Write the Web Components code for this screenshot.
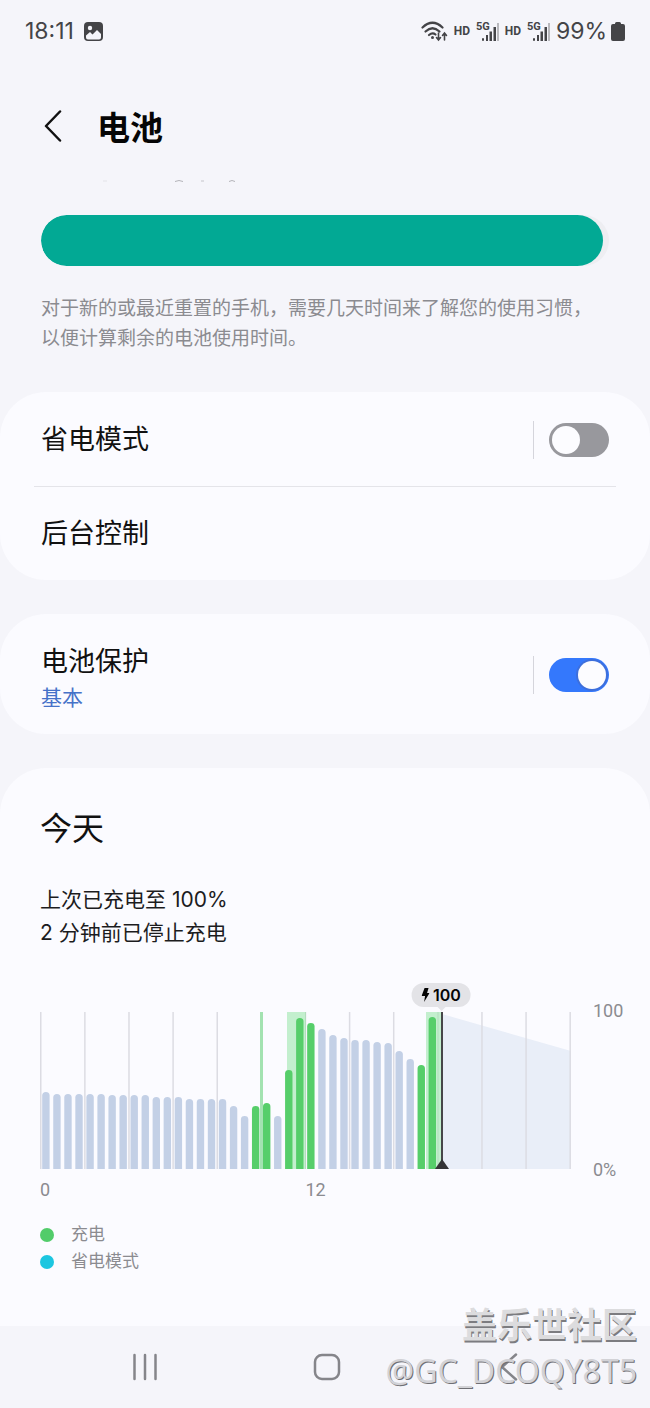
<!DOCTYPE html>
<html lang="zh-CN">
<head>
<meta charset="UTF-8">
<meta name="viewport" content="width=device-width, initial-scale=1">
<title>电池</title>
<style>
  body {
    margin: 0;
    background: #f5f5fa;
    color: #111;
    font-family: Inter, "Noto Sans CJK SC", sans-serif;
  }
</style>
</head>
<body>
<battery-screen>
  <status-bar slot="status" time="18:11" level="99%"></status-bar>
  <page-header slot="header">电池</page-header>

  <battery-level value="99">对于新的或最近重置的手机，需要几天时间来了解您的使用习惯，以便计算剩余的电池使用时间。</battery-level>

  <settings-card>
    <setting-row label="省电模式" toggle="off"></setting-row>
    <setting-row label="后台控制"></setting-row>
  </settings-card>

  <settings-card>
    <setting-row label="电池保护" detail="基本" toggle="on"></setting-row>
  </settings-card>

  <usage-card>
    <span slot="title">今天</span>
    <span slot="charged">上次已充电至 100%</span>
    <span slot="stopped">2 分钟前已停止充电</span>
    <usage-chart current="100"></usage-chart>
    <legend-item slot="legend" color="#52cc6a">充电</legend-item>
    <legend-item slot="legend" color="#1cc6e0">省电模式</legend-item>
  </usage-card>

  <nav-bar slot="nav"></nav-bar>
  <water-mark slot="mark">
    盖乐世社区
    <span slot="user">@GC_DCOQY8T5</span>
  </water-mark>
</battery-screen>

<script>
class BatteryScreen extends HTMLElement {
  constructor() {
    super();
    this.root = this.attachShadow({ mode: "open" });
    this.root.innerHTML = `
    <style>
      :host {
        display: flex;
        flex-direction: column;
        min-height: 100vh;
        position: relative;
      }
      main {
        display: flex;
        flex-direction: column;
        gap: 34px;
        flex: 1;
      }
    </style>
    <slot name="status"></slot>
    <slot name="header"></slot>
    <main><slot></slot></main>
    <slot name="nav"></slot>
    <slot name="mark"></slot>
    `;
  }
}

class StatusBar extends HTMLElement {
  constructor() {
    super();
    this.root = this.attachShadow({ mode: "open" });
  }

  connectedCallback() {
    this.render();
  }

  signal() {
    return `
    <span class="hd">HD</span>
    <span class="signal">
      <span class="net">5G</span>
      <svg width="17" height="18" viewBox="0 0 17 18" fill="#444447">
        <rect x="0" y="15" width="2" height="3" rx="1"/>
        <rect x="4" y="12" width="2" height="6"/>
        <rect x="7.500" y="8.500" width="2.500" height="9.500"/>
        <rect x="11.500" y="4" width="2.500" height="14"/>
        <rect x="15" y="0" width="2" height="18" fill="#b9b9bd"/>
      </svg>
    </span>`;
  }

  render() {
    this.root.innerHTML = `
    <style>
      :host {
        display: flex;
        align-items: center;
        justify-content: space-between;
        height: 62px;
        padding: 0 25px;
        color: #444447;
        font-size: 23px;
        line-height: 28px;
      }
      .left, .right {
        display: flex;
        align-items: center;
      }
      .left { gap: 10px; }
      .right { gap: 6px; }
      svg { display: block; }
      .hd {
        font: 700 12px/16px Roboto, sans-serif;
      }
      .signal {
        display: flex;
        align-items: flex-end;
        height: 20px;
      }
      .net {
        align-self: flex-start;
        margin-right: -8px;
        font: 700 11px/12px Roboto, sans-serif;
      }
      .level {
        display: flex;
        align-items: center;
        gap: 4px;
      }
    </style>
    <div class="left">
      <span>${this.getAttribute("time")}</span>
      <svg width="19" height="19" viewBox="0 0 19 19">
        <rect width="19" height="19" rx="4" fill="#444447"/>
        <circle cx="6" cy="6" r="2.200" fill="#f5f5fa"/>
        <path d="M2 13.500 6 10l2.500 2.500L13 8l4 4v3.500a2 2 0 0 1-2 2H4a2 2 0 0 1-2-2z" fill="#f5f5fa"/>
      </svg>
    </div>
    <div class="right">
      <svg width="27" height="21" viewBox="0 0 27 21" fill="none" stroke="#444447" stroke-width="2.200" stroke-linecap="round">
        <path d="M1.500 6.500Q11.500-3 21.500 6.500"/>
        <path d="M4.500 10.500Q11.500 4 18.500 10.500"/>
        <path d="M8 14q3.500-3 6.500-.5"/>
        <circle cx="11.500" cy="16.500" r="1.500" fill="#444447" stroke="none"/>
        <path d="M17.500 12v6.500M15.500 16.500l2 2.500 2-2.500M23.500 19v-6.500M21.500 14.500l2-2.500 2 2.500" stroke-width="1.600"/>
      </svg>
      ${this.signal()}
      ${this.signal()}
      <span class="level">
        ${this.getAttribute("level")}
        <svg width="14" height="19" viewBox="0 0 14 19" fill="#444447">
          <path d="M4 2V1.500Q4 0 5.500 0h3Q10 0 10 1.500V2h2q2 0 2 2v13q0 2-2 2H2q-2 0-2-2V4q0-2 2-2z"/>
        </svg>
      </span>
    </div>
    `;
  }
}

class PageHeader extends HTMLElement {
  constructor() {
    super();
    this.root = this.attachShadow({ mode: "open" });
    this.root.innerHTML = `
    <style>
      :host {
        display: block;
        padding-top: 42px;
      }
      .bar {
        display: flex;
        align-items: center;
        gap: 24px;
        padding: 0 32px;
        height: 48px;
      }
      button {
        display: flex;
        align-items: center;
        justify-content: center;
        width: 41px;
        height: 48px;
        padding: 0 0 4px;
        border: 0;
        background: none;
      }
      h1 {
        margin: 0;
        font-size: 33px;
        font-weight: 700;
        line-height: 48px;
        color: #050505;
      }
      .edge {
        display: block;
        margin: 27px 0 0 100px;
      }
    </style>
    <div class="bar">
      <button type="button" aria-label="返回">
        <svg width="18" height="32" viewBox="0 0 18 32" fill="none" stroke="#111" stroke-width="2.500" stroke-linecap="round" stroke-linejoin="round">
          <path d="M16 1.500 2 16l14 14.500"/>
        </svg>
      </button>
      <h1><slot></slot></h1>
    </div>
    <!-- top edge of the line scrolled under the header -->
    <svg class="edge" width="140" height="4" viewBox="0 0 140 4" fill="none" stroke="#b4b4b9">
      <path d="M3 2h4" stroke="#e3e3e8"/>
      <path d="M75 2.500q4-2 8 0M129 2.500q3-2 6 0"/>
      <path d="M101 2h3" stroke="#c5c5ca"/>
    </svg>
    `;
  }
}

class BatteryLevel extends HTMLElement {
  constructor() {
    super();
    this.root = this.attachShadow({ mode: "open" });
  }

  connectedCallback() {
    this.root.innerHTML = `
    <style>
      :host {
        display: block;
        padding: 32px 41px 4px;
      }
      .track {
        height: 51px;
        border-radius: 26px;
        background: #eeeef2;
        overflow: hidden;
      }
      .fill {
        width: ${this.getAttribute("value")}%;
        height: 100%;
        border-radius: 26px;
        background: #02a994;
      }
      p {
        margin: 28px 0 0;
        font-size: 19px;
        line-height: 30px;
        color: #8b8b90;
      }
    </style>
    <div class="track"><div class="fill"></div></div>
    <p><slot></slot></p>
    `;
  }
}

class SettingsCard extends HTMLElement {
  constructor() {
    super();
    this.root = this.attachShadow({ mode: "open" });
    this.root.innerHTML = `
    <style>
      :host {
        display: block;
        border-radius: 46px;
        background: #fbfbff;
      }
      ::slotted(setting-row:not(:first-child)) {
        --line: #e4e4e9;
      }
    </style>
    <slot></slot>
    `;
  }
}

class SettingRow extends HTMLElement {
  constructor() {
    super();
    this.root = this.attachShadow({ mode: "open" });
  }

  connectedCallback() {
    this.render();
  }

  render() {
    const label = this.getAttribute("label");
    const detail = this.getAttribute("detail");
    const toggle = this.getAttribute("toggle");

    this.root.innerHTML = `
    <style>
      :host {
        display: block;
        padding: 0 34px;
      }
      .row {
        display: flex;
        align-items: center;
        justify-content: space-between;
        box-sizing: border-box;
        min-height: 94px;
        padding: 15px 7px;
        border-top: 1px solid var(--line, transparent);
      }
      .name {
        display: block;
        padding: 0;
        border: 0;
        background: none;
        font: inherit;
        font-size: 27px;
        line-height: 40px;
        color: #111;
      }
      .detail {
        display: block;
        margin-bottom: 5px;
        font-size: 21px;
        line-height: 32px;
        color: #4672c8;
      }
      .text.tall { padding-top: 12px; }
      .switch {
        display: flex;
        align-items: center;
        gap: 15px;
      }
      .switch::before {
        content: "";
        width: 1px;
        height: 38px;
        background: #d5d5dc;
      }
      input {
        appearance: none;
        display: flex;
        align-items: center;
        box-sizing: border-box;
        width: 60px;
        height: 34px;
        margin: 0;
        padding: 0 3px;
        border-radius: 17px;
        background: #98989d;
      }
      input::before {
        content: "";
        width: 28px;
        height: 28px;
        border-radius: 50%;
        background: #fcfcff;
      }
      input:checked {
        justify-content: flex-end;
        background: #3478fc;
      }
      input:checked::before {
        box-shadow: 0 0 0 2px #3d6fdc;
      }
    </style>
    <div class="row">
      <div class="text ${detail ? "tall" : ""}">
        ${toggle ? `<label class="name" for="toggle">${label}</label>` : `<button class="name" type="button">${label}</button>`}
        ${detail ? `<span class="detail">${detail}</span>` : ""}
      </div>
      ${toggle ? `<div class="switch"><input type="checkbox" role="switch" id="toggle" ${toggle === "on" ? "checked" : ""}></div>` : ""}
    </div>
    `;
  }
}

class UsageCard extends HTMLElement {
  constructor() {
    super();
    this.root = this.attachShadow({ mode: "open" });
    this.root.innerHTML = `
    <style>
      :host {
        display: block;
        flex: 1;
        padding: 37px 26px 46px 40px;
        border-radius: 46px 46px 0 0;
        background: #fbfbff;
      }
      h2 {
        margin: 0 0 30px;
        font-size: 32px;
        font-weight: 400;
        line-height: 48px;
      }
      p {
        margin: 0;
        font-size: 21px;
        line-height: 33px;
        color: #1c1c1e;
      }
      .legend {
        display: flex;
        flex-direction: column;
        margin-top: 20px;
      }
    </style>
    <h2><slot name="title"></slot></h2>
    <p><slot name="charged"></slot></p>
    <p><slot name="stopped"></slot></p>
    <slot></slot>
    <div class="legend"><slot name="legend"></slot></div>
    `;
  }
}

class LegendItem extends HTMLElement {
  constructor() {
    super();
    this.root = this.attachShadow({ mode: "open" });
  }

  connectedCallback() {
    this.root.innerHTML = `
    <style>
      :host {
        display: flex;
        align-items: center;
        gap: 17px;
        font-size: 17px;
        line-height: 27px;
        color: #8b8b90;
      }
      i {
        width: 14px;
        height: 14px;
        border-radius: 50%;
        background: ${this.getAttribute("color")};
      }
    </style>
    <i></i><slot></slot>
    `;
  }
}

// one bar per half hour
const levels = [
  77, 75, 75, 75, 75, 75, 74, 74, 74, 74, 72, 72, 72, 70, 70, 70, 70, 63,
  53, 63, 66, 53, 99, 151, 146, 140, 134, 131, 129, 129, 127, 126, 118,
  110, 104, 152,
];
const charging = [19, 20, 22, 23, 24, 34, 35];

class UsageChart extends HTMLElement {
  constructor() {
    super();
    this.root = this.attachShadow({ mode: "open" });
  }

  connectedCallback() {
    this.render();
  }

  bars() {
    return levels
      .map((h, i) => {
        const x = 2.2 + i * 11.04;
        const y = 157 - h;
        const color = charging.includes(i) ? "#56ce6a" : "#c3d0e6";
        return `<path d="M${x} 157V${y + 3.5}a3.700 3.500 0 0 1 7.400 0V157z" fill="${color}"/>`;
      })
      .join("");
  }

  grid() {
    let lines = "";
    for (let i = 0; i <= 12; i++) {
      if (i === 5 || i === 9) continue;
      lines += `<path d="M${0.75 + i * 44.12} 0V157" stroke="#dcdce3" stroke-width="1.500"/>`;
    }
    return lines;
  }

  render() {
    this.root.innerHTML = `
    <style>
      :host {
        display: block;
        margin-top: 63px;
        font-family: Roboto, "Noto Sans CJK SC", sans-serif;
        font-size: 18px;
        line-height: 22px;
        color: #8b8b90;
      }
      .chart {
        display: grid;
        grid-template-columns: 1fr 31px;
        column-gap: 22px;
      }
      .plot { position: relative; }
      svg { display: block; }
      .plot > svg {
        width: 100%;
        height: 157px;
      }
      .scale {
        display: flex;
        flex-direction: column;
        justify-content: space-between;
        margin: -12px 0;
      }
      .hours {
        display: grid;
        grid-template-columns: 1fr 1fr;
        margin-top: 10px;
      }
      .tip {
        position: absolute;
        left: 75.600%;
        bottom: 100%;
        transform: translateX(-50%);
        display: flex;
        align-items: center;
        gap: 3px;
        margin-bottom: 5px;
        padding: 0 10px;
        border-radius: 12px;
        background: #e3e3e7;
        color: #050505;
        font: 600 16px/24px Inter, sans-serif;
      }
      .tip::after {
        content: "";
        position: absolute;
        top: 100%;
        left: 50%;
        margin-left: -4px;
        border: 4px solid transparent;
        border-top-color: #e3e3e7;
        border-bottom: 0;
      }
    </style>
    <div class="chart">
      <div class="plot">
        <svg viewBox="0 0 531 157" preserveAspectRatio="none">
          <path d="M402 2 531 39V157H402z" fill="#e9eef8"/>
          ${this.grid()}
          <path d="M247 0h19v157h-19zM386 0h15v157h-15z" fill="#c3efce"/>
          <path d="M221.500 0V157" stroke="#a3e2b1" stroke-width="3"/>
          <path d="M265.500 0V157M398 0V157" stroke="#b3dcbd"/>
          ${this.bars()}
          <path d="M402 0V157" stroke="#47474a" stroke-width="2"/>
          <path d="M395 157 402 147 409 157z" fill="#343437"/>
        </svg>
        <div class="tip">
          <svg width="8" height="14" viewBox="0 0 8 14" fill="#050505"><path d="M3 0h4L5.500 5H8L2.500 14 3.500 8H0z"/></svg>
          ${this.getAttribute("current")}
        </div>
        <div class="hours"><span>0</span><span>12</span></div>
      </div>
      <div class="scale" style="height: 181px"><span>100</span><span>0%</span></div>
    </div>
    `;
  }
}

class NavBar extends HTMLElement {
  constructor() {
    super();
    this.root = this.attachShadow({ mode: "open" });
    this.root.innerHTML = `
    <style>
      :host { display: block; }
      nav {
        display: flex;
        align-items: center;
        justify-content: space-between;
        height: 82px;
        padding: 0 114px 0 118px;
        background: #f5f5fa;
      }
      button {
        display: flex;
        align-items: center;
        justify-content: center;
        width: 54px;
        height: 54px;
        padding: 0;
        border: 0;
        background: none;
      }
      svg {
        fill: none;
        stroke: #85858a;
        stroke-width: 2.5;
        stroke-linecap: round;
        stroke-linejoin: round;
      }
    </style>
    <nav>
      <button type="button" aria-label="最近"><svg width="26" height="28" viewBox="0 0 26 28"><path d="M2.500 2v24M13 2v24M23.500 2v24"/></svg></button>
      <button type="button" aria-label="主屏幕"><svg width="28" height="28" viewBox="0 0 28 28"><rect x="2" y="2" width="24" height="24" rx="7"/></svg></button>
      <button type="button" aria-label="返回"><svg width="18" height="28" viewBox="0 0 18 28"><path d="M16 1.500 2 14l14 12.500"/></svg></button>
    </nav>
    `;
  }
}

class WaterMark extends HTMLElement {
  constructor() {
    super();
    this.root = this.attachShadow({ mode: "open" });
    this.root.innerHTML = `
    <style>
      :host {
        position: absolute;
        right: 13px;
        bottom: 14px;
        display: flex;
        flex-direction: column;
        align-items: flex-end;
        pointer-events: none;
      }
      .name {
        font-size: 35px;
        font-weight: 700;
        line-height: 46px;
        color: #dcdcde;
        text-shadow: 1px 2px 0 #7c7c80;
      }
      .user {
        font-family: "Noto Sans", sans-serif;
        font-size: 32px;
        line-height: 46px;
        color: #d2d2d6;
        text-shadow: 1px 1px 0 #6f6f74;
      }
    </style>
    <span class="name"><slot></slot></span>
    <span class="user"><slot name="user"></slot></span>
    `;
  }
}

customElements.define("battery-screen", BatteryScreen);
customElements.define("status-bar", StatusBar);
customElements.define("page-header", PageHeader);
customElements.define("battery-level", BatteryLevel);
customElements.define("settings-card", SettingsCard);
customElements.define("setting-row", SettingRow);
customElements.define("usage-card", UsageCard);
customElements.define("legend-item", LegendItem);
customElements.define("usage-chart", UsageChart);
customElements.define("nav-bar", NavBar);
customElements.define("water-mark", WaterMark);
</script>
</body>
</html>
